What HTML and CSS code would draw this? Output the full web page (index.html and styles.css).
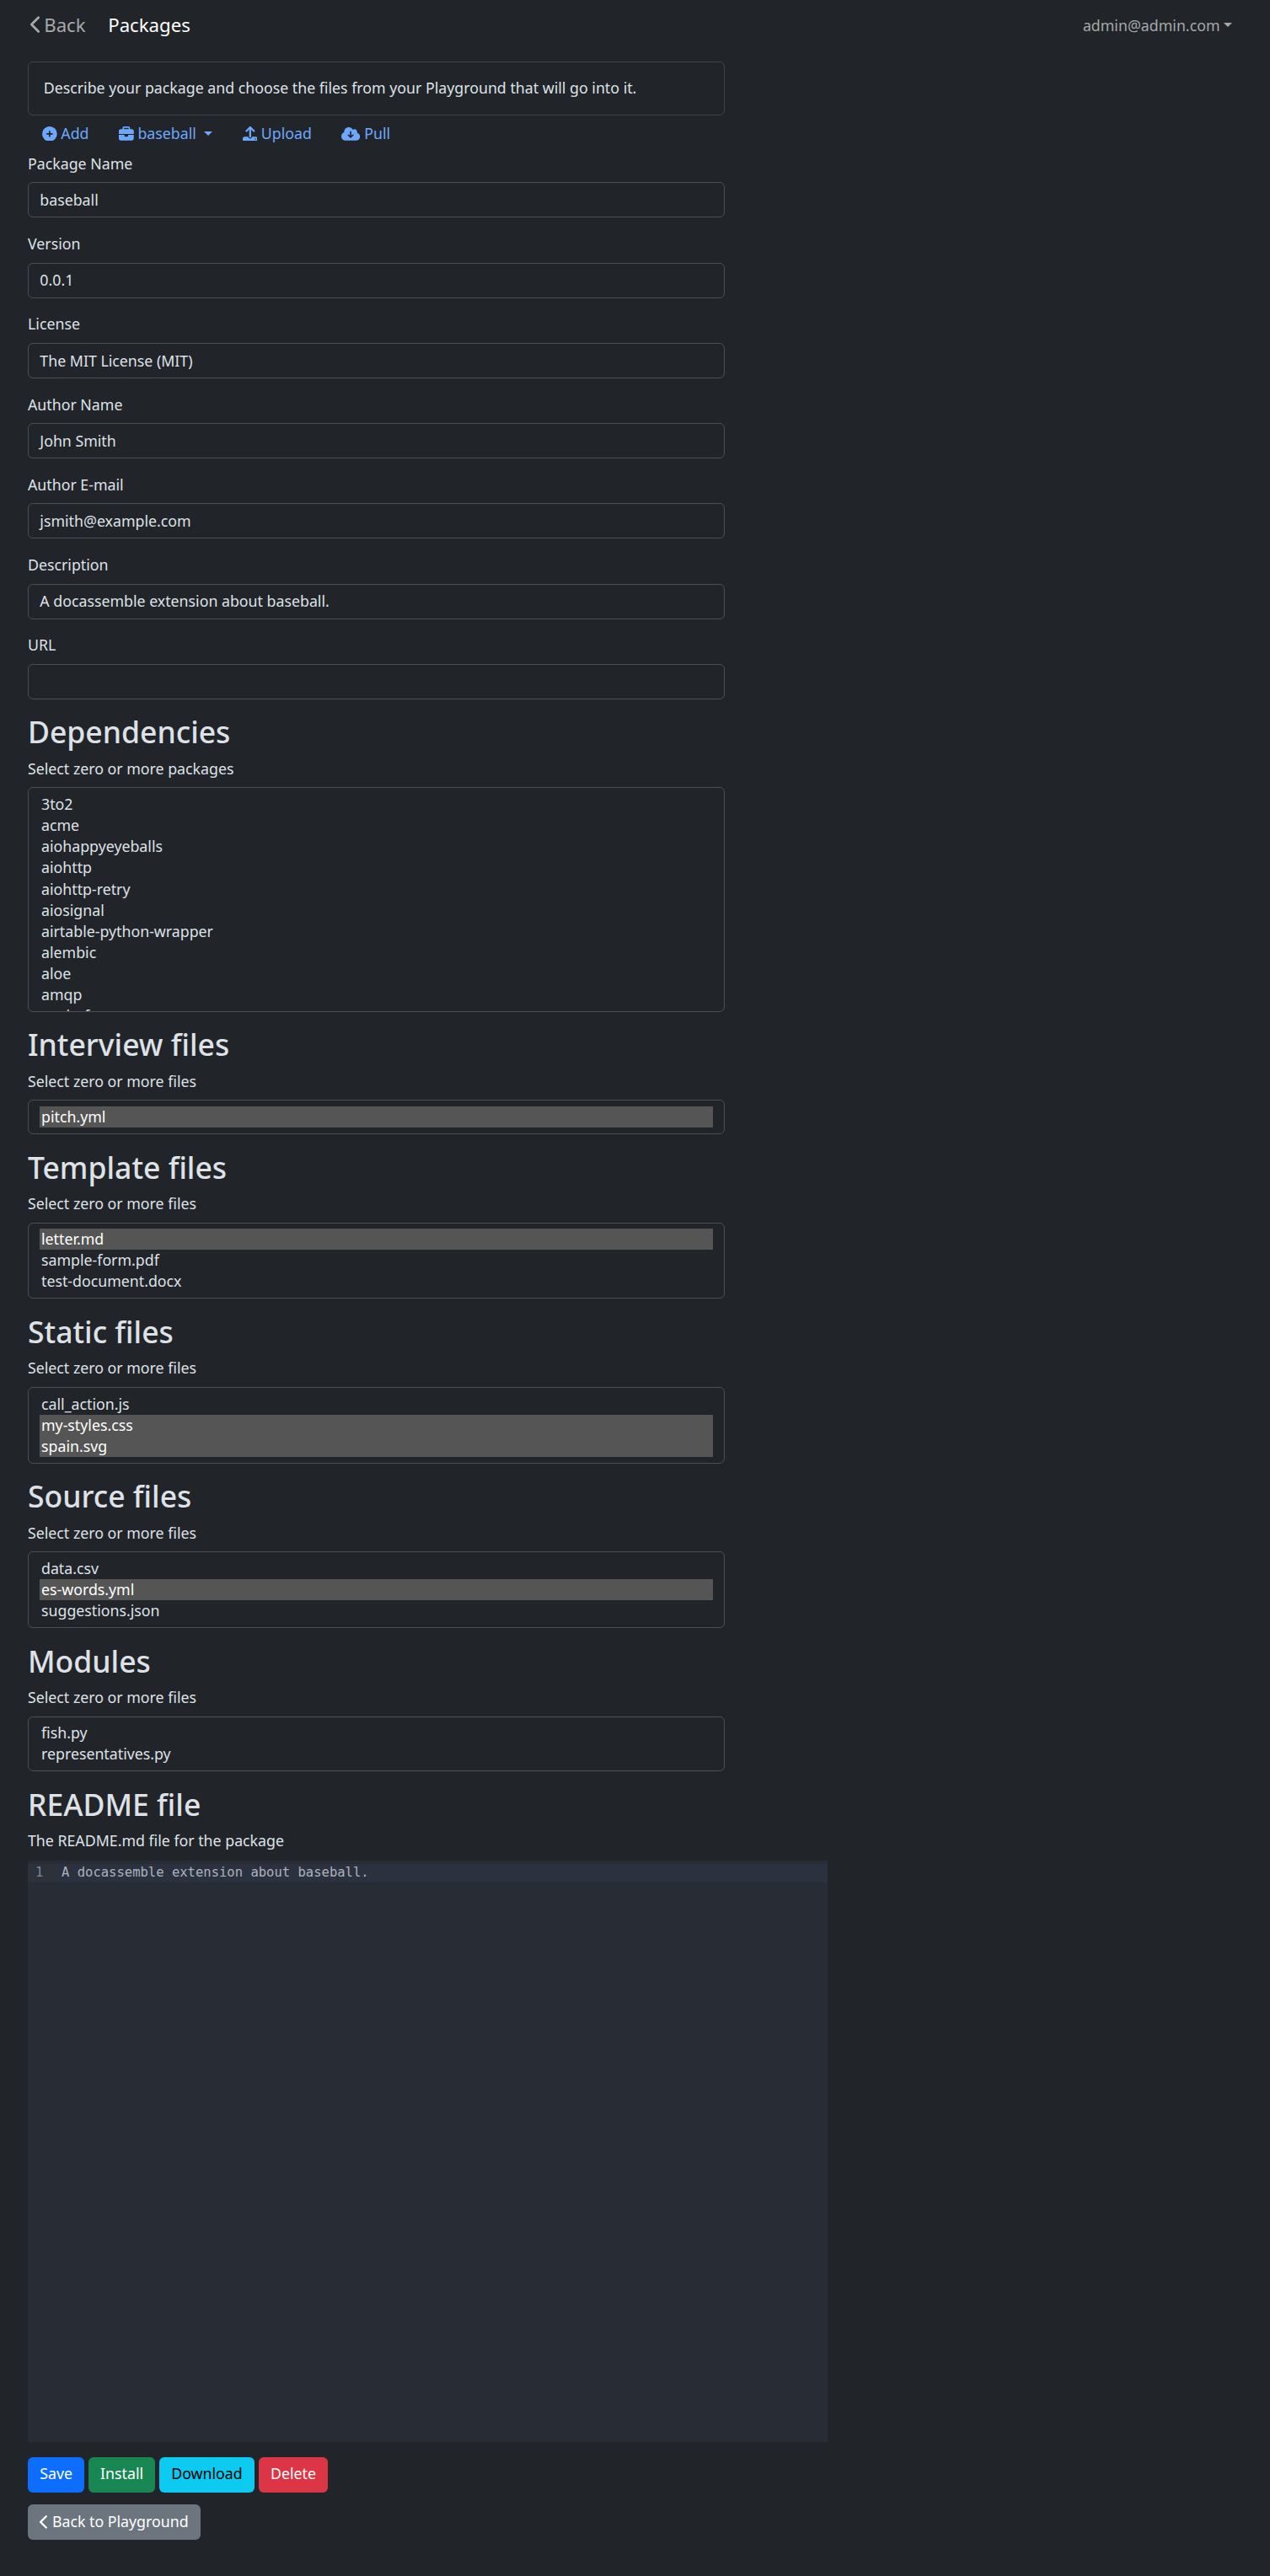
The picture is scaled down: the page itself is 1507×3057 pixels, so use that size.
FILE: index.html
```html
<!DOCTYPE html>
<html lang="en">
<head>
<meta charset="utf-8">
<title>Packages</title>
<link rel="stylesheet" href="styles.css">
</head>
<body>
<nav class="navbar">
<a class="back"><svg class="chev" viewBox="0 0 320 512"><path d="M9.400 233.400c-12.500 12.500-12.500 32.800 0 45.300l192 192c12.500 12.500 32.800 12.500 45.300 0s12.500-32.800 0-45.300L77.300 256 246.600 86.600c12.500-12.500 12.500-32.800 0-45.300s-32.800-12.500-45.300 0l-192 192z"/></svg>Back</a>
<span class="brand">Packages</span>
<a class="user">admin@admin.com</a>
</nav>
<main class="content">
<div class="column">
<div class="card">Describe your package and choose the files from your Playground that will go into it.</div>
<ul class="pills">
<li><svg viewBox="0 0 512 512"><path d="M256 512A256 256 0 1 0 256 0a256 256 0 1 0 0 512zM232 344V280H168c-13.300 0-24-10.700-24-24s10.700-24 24-24h64V168c0-13.300 10.700-24 24-24s24 10.700 24 24v64h64c13.300 0 24 10.700 24 24s-10.700 24-24 24H280v64c0 13.300-10.700 24-24 24s-24-10.700-24-24z"/></svg> Add</li>
<li class="caret"><svg viewBox="0 0 512 512"><path d="M184 48H328c4.400 0 8 3.600 8 8V96H176V56c0-4.400 3.600-8 8-8zm-56 8V96H64C28.700 96 0 124.700 0 160v96H192 320 512V160c0-35.300-28.700-64-64-64H384V56c0-30.900-25.100-56-56-56H184c-30.900 0-56 25.100-56 56zM512 288H320v32c0 17.700-14.300 32-32 32H224c-17.700 0-32-14.300-32-32V288H0V416c0 35.300 28.700 64 64 64H448c35.300 0 64-28.700 64-64V288z"/></svg> baseball&nbsp;</li>
<li><svg viewBox="0 0 512 512"><path d="M288 109.300V352c0 17.700-14.300 32-32 32s-32-14.300-32-32V109.300l-73.400 73.400c-12.500 12.500-32.800 12.500-45.300 0s-12.500-32.800 0-45.300l128-128c12.500-12.500 32.800-12.500 45.300 0l128 128c12.500 12.500 12.500 32.800 0 45.300s-32.800 12.500-45.300 0L288 109.300zM64 352H192c0 35.300 28.700 64 64 64s64-28.700 64-64H448c35.300 0 64 28.700 64 64v32c0 35.300-28.700 64-64 64H64c-35.300 0-64-28.700-64-64V416c0-35.300 28.700-64 64-64zM432 456a24 24 0 1 0 0-48 24 24 0 1 0 0 48z"/></svg> Upload</li>
<li><svg viewBox="0 0 640 512"><path d="M144 480C64.500 480 0 415.500 0 336c0-62.800 40.200-116.200 96.200-135.900c-.1-2.700-.2-5.400-.2-8.100c0-88.400 71.600-160 160-160c59.300 0 111 32.200 138.700 80.200C409.900 102 428.300 96 448 96c53 0 96 43 96 96c0 12.200-2.300 23.800-6.400 34.600C596 238.400 640 290.100 640 352c0 70.700-57.300 128-128 128H144zm79-167l80 80c9.400 9.400 24.600 9.400 33.900 0l80-80c9.400-9.400 9.400-24.600 0-33.900s-24.600-9.400-33.900 0l-39 39V184c0-13.300-10.700-24-24-24s-24 10.700-24 24V318.100l-39-39c-9.400-9.400-24.600-9.400-33.900 0s-9.400 24.600 0 33.900z"/></svg> Pull</li>
</ul>
<div class="field"><label>Package Name</label><div class="input">baseball</div></div>
<div class="field"><label>Version</label><div class="input">0.0.1</div></div>
<div class="field"><label>License</label><div class="input">The MIT License (MIT)</div></div>
<div class="field"><label>Author Name</label><div class="input">John Smith</div></div>
<div class="field"><label>Author E-mail</label><div class="input">jsmith@example.com</div></div>
<div class="field"><label>Description</label><div class="input">A docassemble extension about baseball.</div></div>
<div class="field"><label>URL</label><div class="input"></div></div>
<h2>Dependencies</h2>
<p>Select zero or more packages</p>
<div class="list tall"><div>3to2</div><div>acme</div><div>aiohappyeyeballs</div><div>aiohttp</div><div>aiohttp-retry</div><div>aiosignal</div><div>airtable-python-wrapper</div><div>alembic</div><div>aloe</div><div>amqp</div><div>asgiref</div></div>
<h2>Interview files</h2>
<p>Select zero or more files</p>
<div class="list"><div class="sel">pitch.yml</div></div>
<h2>Template files</h2>
<p>Select zero or more files</p>
<div class="list"><div class="sel">letter.md</div><div>sample-form.pdf</div><div>test-document.docx</div></div>
<h2>Static files</h2>
<p>Select zero or more files</p>
<div class="list"><div>call_action.js</div><div class="sel">my-styles.css</div><div class="sel">spain.svg</div></div>
<h2>Source files</h2>
<p>Select zero or more files</p>
<div class="list"><div>data.csv</div><div class="sel">es-words.yml</div><div>suggestions.json</div></div>
<h2>Modules</h2>
<p>Select zero or more files</p>
<div class="list"><div>fish.py</div><div>representatives.py</div></div>
<h2>README file</h2>
<p>The README.md file for the package</p>
</div>
<div class="editor"><div class="line"><span class="num">1</span><span class="code">A docassemble extension about baseball.</span></div></div>
<div class="buttons"><button class="btn save">Save</button><button class="btn install">Install</button><button class="btn download">Download</button><button class="btn delete">Delete</button></div>
<button class="btn playground"><svg viewBox="0 0 320 512"><path d="M9.400 233.400c-12.500 12.500-12.500 32.800 0 45.300l192 192c12.500 12.500 32.800 12.500 45.300 0s12.500-32.800 0-45.300L77.300 256 246.600 86.600c12.500-12.500 12.500-32.800 0-45.300s-32.800-12.500-45.300 0l-192 192z"/></svg> Back to Playground</button>
</main>
</body>
</html>
```

FILE: styles.css
```css
* { box-sizing: border-box; }
html { font-size: 17.760px; }
body { margin: 0; min-height: 3057px; background: #212529; color: #dee2e6; font: 1rem/1.5 "Noto Sans", sans-serif; }
svg { height: 1em; fill: currentColor; vertical-align: -.125em; }
.navbar { display: flex; align-items: center; height: 59px; padding: 0 45px 0 36px; }
.back { font-size: 1.25rem; color: #a6a8a9; margin-right: 26.600px; }
.chev { margin-right: 2.400px; }
.brand { font-size: 1.25rem; color: #fff; }
.user { margin: 1px 0 0 auto; color: #a6a8a9; }
.user::after, .caret::after { content: ""; display: inline-block; margin-left: .255em; vertical-align: .255em; border-top: .3em solid; border-left: .3em solid transparent; border-right: .3em solid transparent; }
.content { padding: 13.600px 33px 0; }
.column { width: 827px; }
.card { border: 1px solid #414549; border-radius: 6px; padding: 1rem; }
.pills { list-style: none; display: flex; margin: 0; padding: 8.400px 17px 9.200px; gap: 2rem; color: #6ea8fe; }
.field { margin-bottom: 1rem; }
label { display: block; margin-bottom: .5rem; }
.input { border: 1px solid #495057; border-radius: 6px; padding: .375rem .75rem; min-height: calc(2.25rem + 2px); }
h2 { margin: 0 0 .5rem; font-weight: 500; font-size: 2rem; line-height: 1.2; }
p { margin: 0 0 .5rem; }
.list { border: 1px solid #495057; border-radius: 6px; padding: .375rem 13px; margin-bottom: 1rem; line-height: 24px; overflow: hidden; }
.list div { padding: 0 2px 1px; height: 25.100px; }
.tall { height: 266.200px; }
.sel { background: #555; color: #fff; }
.editor { width: 949px; height: 690px; background: #282c34; color: #abb2bf; font: .875rem/20px "DejaVu Sans Mono", monospace; margin: 10.500px 0 18px; padding-top: 4px; }
.line { display: flex; height: 22px; background: #2c313f; }
.num { width: 34px; padding-left: 9px; margin-right: 6px; color: #7d8799; background: #2c313a; }
.buttons { display: flex; gap: 4.800px; margin-bottom: 14px; }
.btn { display: block; border: 0; border-radius: 6px; height: 42px; padding: 0 14.200px 4px; font: inherit; color: #fff; }
.save { background: #0d6efd; }
.install { background: #198754; }
.download { background: #0dcaf0; color: #000; }
.delete { background: #dc3545; }
.playground { background: #6c757d; padding-bottom: 2px; }
.playground svg { margin-right: -1px; }
```
